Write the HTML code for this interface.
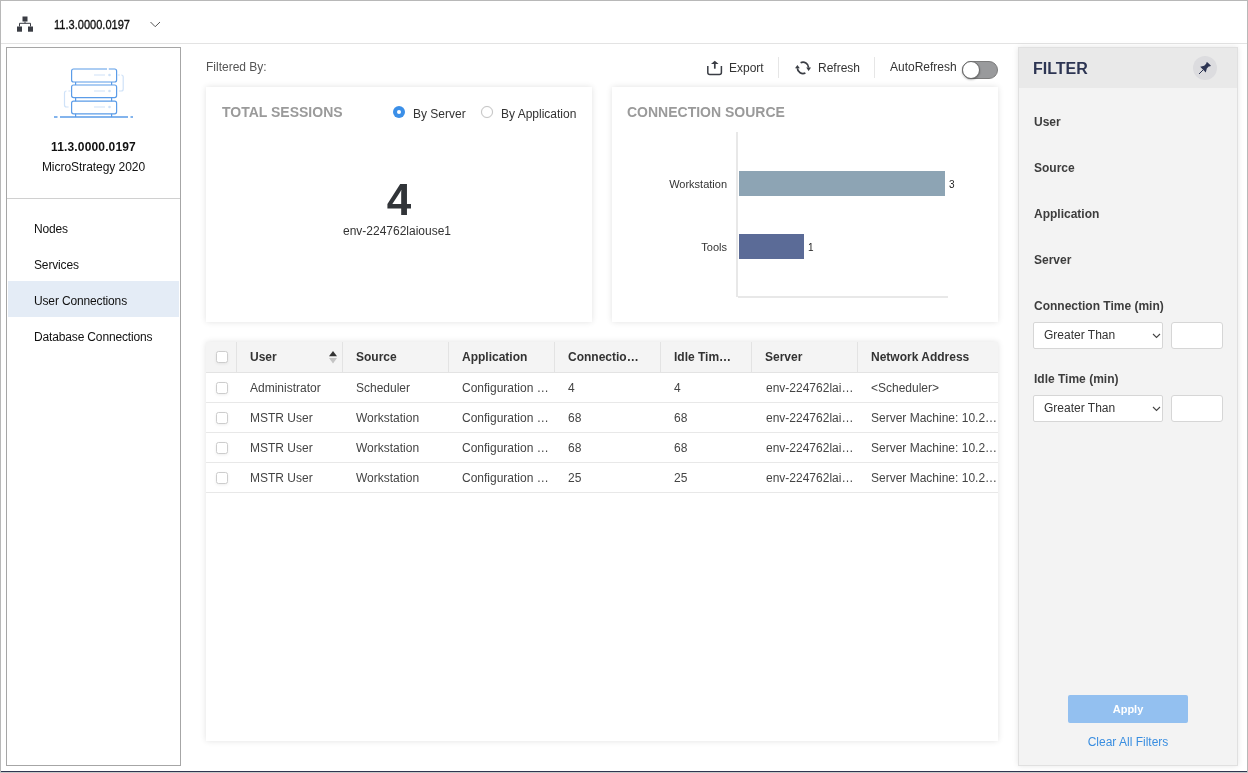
<!DOCTYPE html>
<html><head><meta charset="utf-8">
<style>
*{box-sizing:border-box;margin:0;padding:0}
html,body{width:1248px;height:773px;overflow:hidden;background:#fff;}
body{will-change:transform;font-family:"Liberation Sans",sans-serif;color:#333}
.abs{position:absolute}
#frame{position:absolute;left:0;top:0;width:1248px;height:773px;border-left:1px solid #b8b8b8;border-top:1px solid #b8b8b8;border-right:1px solid #b8b8b8}
#botline{position:absolute;left:1px;top:771px;width:1246px;height:1px;background:#303650}
#botgray{position:absolute;left:0;top:772px;width:1248px;height:1px;background:#c8c8c8}
#hdr{position:absolute;left:1px;top:1px;width:1246px;height:43px;border-bottom:1px solid #e3e3e3}
#side{position:absolute;left:6px;top:47px;width:175px;height:719px;border:1px solid #a6a6a6}
.nav{position:absolute;left:1px;width:171px;height:36px;font-size:12px;color:#111;padding-left:26px;line-height:40px;letter-spacing:-0.15px}
.card{position:absolute;background:#fff;box-shadow:0 0 6px rgba(0,0,0,0.12)}
.ttl{position:absolute;font-size:14px;font-weight:bold;color:#9a9a9a;white-space:nowrap}
#table{position:absolute;left:206px;top:342px;width:792px;height:399px;background:#fff;box-shadow:0 0 6px rgba(0,0,0,0.12)}
.th{position:absolute;top:0;height:31px;background:#f4f4f4;border-bottom:1px solid #e3e3e3;font-size:12px;font-weight:bold;color:#333;line-height:31px;white-space:nowrap}
.row{position:absolute;left:0;width:792px;height:30px;border-bottom:1px solid #e8e8e8;font-size:12px;color:#444;line-height:30px;white-space:nowrap}
.cell{position:absolute;top:0}
.cb{position:absolute;width:12px;height:12px;border:1px solid #cdcdcd;border-radius:2.5px;background:#fff;box-shadow:0 1px 3px rgba(0,0,0,0.07)}
#filter{position:absolute;left:1018px;top:47px;width:220px;height:719px;background:#f3f3f3;border:1px solid #e0e0e0;box-shadow:0 0 6px rgba(0,0,0,0.10)}
.flab{position:absolute;left:15px;font-size:12px;font-weight:bold;color:#3d3d3d;white-space:nowrap}
.sel{position:absolute;left:14px;width:130px;height:27px;background:#fff;border:1px solid #d6d6d6;border-radius:2px;font-size:12px;color:#333;padding-left:10px;line-height:25px}
.inp{position:absolute;left:152px;width:52px;height:27px;background:#fff;border:1px solid #d6d6d6;border-radius:3px}
</style></head><body>
<div id="frame"></div>
<div id="hdr">
  <svg class="abs" style="left:-1px;top:-1px" width="40" height="40" viewBox="0 0 40 40">
    <rect x="22.5" y="16.5" width="5" height="5" fill="#3a3d44"/>
    <rect x="17" y="26.5" width="5" height="5.2" fill="#3a3d44"/>
    <rect x="28" y="26.5" width="5" height="5.2" fill="#3a3d44"/>
    <path d="M25 21.5V23.3M19.5 26.5V23.3H30.5V26.5" stroke="#3a3d44" stroke-width="1" fill="none"/>
  </svg>
  <div class="abs" style="left:53px;top:16px;font-size:13px;color:#111;transform:scaleX(0.85);transform-origin:0 0;white-space:nowrap;-webkit-text-stroke:0.35px #111">11.3.0000.0197</div>
  <svg class="abs" style="left:-1px;top:-1px" width="170" height="40" viewBox="0 0 170 40"><path d="M150.5 22L155.2 26.7L160 22" stroke="#555" stroke-width="1" fill="none"/></svg>
</div>
<div id="side">
  <svg class="abs" style="left:-7px;top:-48px" width="180" height="130" viewBox="0 0 180 130">
    <g fill="none" stroke="#5b9ce8" stroke-width="1.2">
      <rect x="71.6" y="69" width="45" height="13" rx="2"/>
      <rect x="71.6" y="85" width="45" height="12.6" rx="2"/>
      <rect x="71.6" y="101.2" width="45" height="12.6" rx="2"/>
      <path d="M75.6 82V85M111.6 82V85M75.6 97.6V101.2M111.6 97.6V101.2M75.6 113.8V117M111.6 113.8V117"/>
      <path d="M54 117H57.5M60 117H128M130.5 117H133" stroke-width="1.4"/>
    </g>
    <g fill="none" stroke="#cfe2f8" stroke-width="1.2">
      <path d="M94 75H105M94 91H105M94 107H105"/>
      <path d="M117.5 75H119.8M121.3 75Q123.2 75 123.2 77V89Q123.2 91 121.3 91H118.8"/>
      <path d="M70.5 91H68.4M66.5 91Q64.5 91 64.5 93V105Q64.5 107 66.5 107H68.6"/>
    </g>
    <g fill="#cfe2f8"><circle cx="109.5" cy="75" r="1.3"/><circle cx="109.5" cy="91" r="1.3"/><circle cx="109.5" cy="107" r="1.3"/></g>
    <rect x="107" y="67.5" width="1.8" height="3" fill="#fff"/>
  </svg>
  <div class="abs" style="left:0;top:92px;width:173px;text-align:center;font-size:12px;font-weight:bold;color:#111;letter-spacing:0.15px">11.3.0000.0197</div>
  <div class="abs" style="left:0;top:112px;width:173px;text-align:center;font-size:12px;color:#111;letter-spacing:-0.05px">MicroStrategy 2020</div>
  <div class="abs" style="left:0;top:150px;width:173px;height:1px;background:#d0d0d0"></div>
  <div class="nav" style="top:161px">Nodes</div>
  <div class="nav" style="top:197px">Services</div>
  <div class="nav" style="top:233px;background:#e4ecf6">User Connections</div>
  <div class="nav" style="top:269px">Database Connections</div>
</div>

<div class="abs" style="left:206px;top:60px;font-size:12px;color:#555">Filtered By:</div>
<svg class="abs" style="left:700px;top:55px" width="30" height="25" viewBox="700 55 30 25">
  <path d="M707.8 66V72.4Q707.8 74.4 709.8 74.4H719.4Q721.4 74.4 721.4 72.4V66" stroke="#3a3d44" stroke-width="1.5" fill="none"/>
  <path d="M714.8 62.5V68.7" stroke="#3a3d44" stroke-width="1.7"/>
  <path d="M711 64L714.8 60.8L718.6 64Z" fill="#3a3d44"/>
</svg>
<div class="abs" style="left:729px;top:61px;font-size:12px;color:#333">Export</div>
<div class="abs" style="left:778px;top:57px;width:1px;height:21px;background:#e6e6e6"></div>
<svg class="abs" style="left:790px;top:55px" width="25" height="25" viewBox="790 55 25 25">
  <path d="M800.6 62.8A5.6 5.6 0 0 1 808.6 67.6" stroke="#3a3d44" stroke-width="1.8" fill="none"/>
  <path d="M805.4 73A5.6 5.6 0 0 1 797.4 68.2" stroke="#3a3d44" stroke-width="1.8" fill="none"/>
  <path d="M806.2 67.6H811L808.6 70.9Z" fill="#3a3d44"/>
  <path d="M795 68.2H799.8L797.4 64.9Z" fill="#3a3d44"/>
</svg>
<div class="abs" style="left:818px;top:61px;font-size:12px;color:#333">Refresh</div>
<div class="abs" style="left:874px;top:57px;width:1px;height:21px;background:#e6e6e6"></div>
<div class="abs" style="left:890px;top:60px;font-size:12px;color:#333">AutoRefresh</div>
<div class="abs" style="left:962px;top:61px;width:36px;height:18px;border-radius:9px;background:#999a9c;border:1px solid #7c7c7c"></div>
<div class="abs" style="left:962px;top:61px;width:18px;height:18px;border-radius:50%;background:#fff;border:1px solid #666;box-shadow:0 1px 2px rgba(0,0,0,0.3)"></div>

<div class="card" style="left:206px;top:87px;width:386px;height:235px">
  <div class="ttl" style="left:16px;top:17px">TOTAL SESSIONS</div>
  <div class="abs" style="left:187px;top:19px;width:12px;height:12px;border-radius:50%;background:#3b8fe8"><div class="abs" style="left:4px;top:4px;width:4px;height:4px;border-radius:50%;background:#fff"></div></div>
  <div class="abs" style="left:207px;top:20px;font-size:12px;color:#333">By Server</div>
  <div class="abs" style="left:275px;top:19px;width:12px;height:12px;border-radius:50%;background:#fff;border:1px solid #c4c4c4;box-shadow:0 0 1px rgba(0,0,0,0.1)"></div>
  <div class="abs" style="left:295px;top:20px;font-size:12px;color:#333">By Application</div>
  <div class="abs" style="left:0;top:88px;width:386px;text-align:center;font-size:44px;font-weight:bold;color:#313438">4</div>
  <div class="abs" style="left:-2px;top:137px;width:386px;text-align:center;font-size:12px;color:#333">env-224762laiouse1</div>
</div>
<div class="card" style="left:612px;top:87px;width:386px;height:235px">
  <div class="ttl" style="left:15px;top:17px">CONNECTION SOURCE</div>
  <div class="abs" style="left:124px;top:45px;width:2px;height:165px;background:#e8e8e8"></div>
  <div class="abs" style="left:126px;top:209px;width:210px;height:2px;background:#e8e8e8"></div>
  <div class="abs" style="left:127px;top:84px;width:206px;height:25px;background:#8da4b4"></div>
  <div class="abs" style="left:127px;top:147px;width:65px;height:25px;background:#5b6b97"></div>
  <div class="abs" style="left:0;top:91px;width:115px;text-align:right;font-size:11px;color:#333">Workstation</div>
  <div class="abs" style="left:0;top:154px;width:115px;text-align:right;font-size:11px;color:#333">Tools</div>
  <div class="abs" style="left:337px;top:92px;font-size:10px;color:#222">3</div>
  <div class="abs" style="left:196px;top:155px;font-size:10px;color:#222">1</div>
</div>

<div id="table">
  <div class="th" style="left:0;width:31px;border-right:1px solid #e3e3e3"><div class="cb" style="left:10px;top:9px"></div></div>
  <div class="th" style="left:31px;width:106px;border-right:1px solid #e3e3e3;padding-left:13px">User<svg class="abs" style="left:91px;top:8px" width="10" height="15" viewBox="0 0 10 15"><path d="M1 6.3 L5 1 L9 6.3Z" fill="#333"/><path d="M1 8 L5 13.5 L9 8Z" fill="#c4c4c4"/></svg></div>
  <div class="th" style="left:137px;width:106px;border-right:1px solid #e3e3e3;padding-left:13px">Source</div>
  <div class="th" style="left:243px;width:106px;border-right:1px solid #e3e3e3;padding-left:13px">Application</div>
  <div class="th" style="left:349px;width:106px;border-right:1px solid #e3e3e3;padding-left:13px">Connectio…</div>
  <div class="th" style="left:455px;width:91px;border-right:1px solid #e3e3e3;padding-left:13px">Idle Tim…</div>
  <div class="th" style="left:546px;width:106px;border-right:1px solid #e3e3e3;padding-left:13px">Server</div>
  <div class="th" style="left:652px;width:140px;padding-left:13px">Network Address</div>
  <div class="row" style="top:31px"><div class="cb" style="left:10px;top:9px"></div><div class="cell" style="left:44px">Administrator</div><div class="cell" style="left:150px">Scheduler</div><div class="cell" style="left:256px">Configuration …</div><div class="cell" style="left:362px">4</div><div class="cell" style="left:468px">4</div><div class="cell" style="left:560px">env-224762lai…</div><div class="cell" style="left:665px">&lt;Scheduler&gt;</div></div>
  <div class="row" style="top:61px"><div class="cb" style="left:10px;top:9px"></div><div class="cell" style="left:44px">MSTR User</div><div class="cell" style="left:150px">Workstation</div><div class="cell" style="left:256px">Configuration …</div><div class="cell" style="left:362px">68</div><div class="cell" style="left:468px">68</div><div class="cell" style="left:560px">env-224762lai…</div><div class="cell" style="left:665px">Server Machine: 10.2…</div></div>
  <div class="row" style="top:91px"><div class="cb" style="left:10px;top:9px"></div><div class="cell" style="left:44px">MSTR User</div><div class="cell" style="left:150px">Workstation</div><div class="cell" style="left:256px">Configuration …</div><div class="cell" style="left:362px">68</div><div class="cell" style="left:468px">68</div><div class="cell" style="left:560px">env-224762lai…</div><div class="cell" style="left:665px">Server Machine: 10.2…</div></div>
  <div class="row" style="top:121px"><div class="cb" style="left:10px;top:9px"></div><div class="cell" style="left:44px">MSTR User</div><div class="cell" style="left:150px">Workstation</div><div class="cell" style="left:256px">Configuration …</div><div class="cell" style="left:362px">25</div><div class="cell" style="left:468px">25</div><div class="cell" style="left:560px">env-224762lai…</div><div class="cell" style="left:665px">Server Machine: 10.2…</div></div>
</div>

<div id="filter">
  <div class="abs" style="left:0;top:0;width:218px;height:40px;background:#e9e9e9"></div>
  <div class="abs" style="left:14px;top:12px;font-size:16px;font-weight:bold;color:#2d3553">FILTER</div>
  <div class="abs" style="left:174px;top:8px;width:24px;height:24px;border-radius:50%;background:#dcdcdf"></div>
  <svg class="abs" style="left:-1019px;top:-48px" width="1248" height="100" viewBox="0 0 1248 100">
    <path d="M1207.4 62.2L1211 65.8L1209.8 66.6L1209 66.2L1206.8 68.4L1205.8 72.4L1200.2 66.8L1204.2 65.8L1206.4 63.6L1206 62.8Z" fill="#2d3553"/>
    <path d="M1203 70L1199 74" stroke="#2d3553" stroke-width="1"/>
  </svg>
  <div class="flab" style="top:67px">User</div>
  <div class="flab" style="top:113px">Source</div>
  <div class="flab" style="top:159px">Application</div>
  <div class="flab" style="top:205px">Server</div>
  <div class="flab" style="top:251px">Connection Time (min)</div>
  <div class="sel" style="top:274px">Greater Than<svg class="abs" style="left:118px;top:9.5px" width="9" height="6" viewBox="0 0 9 6"><path d="M1 1L4.5 4.5L8 1" stroke="#444" stroke-width="1.1" fill="none"/></svg></div>
  <div class="inp" style="top:274px"></div>
  <div class="flab" style="top:324px">Idle Time (min)</div>
  <div class="sel" style="top:347px">Greater Than<svg class="abs" style="left:118px;top:9.5px" width="9" height="6" viewBox="0 0 9 6"><path d="M1 1L4.5 4.5L8 1" stroke="#444" stroke-width="1.1" fill="none"/></svg></div>
  <div class="inp" style="top:347px"></div>
  <div class="abs" style="left:49px;top:647px;width:120px;height:28px;border-radius:2px;background:#93c0f0;color:#fff;font-size:11px;font-weight:bold;text-align:center;line-height:28px">Apply</div>
  <div class="abs" style="left:0;top:687px;width:218px;text-align:center;font-size:12px;color:#3a8ee0">Clear All Filters</div>
</div>
<div id="botline"></div><div id="botgray"></div>
</body></html>
